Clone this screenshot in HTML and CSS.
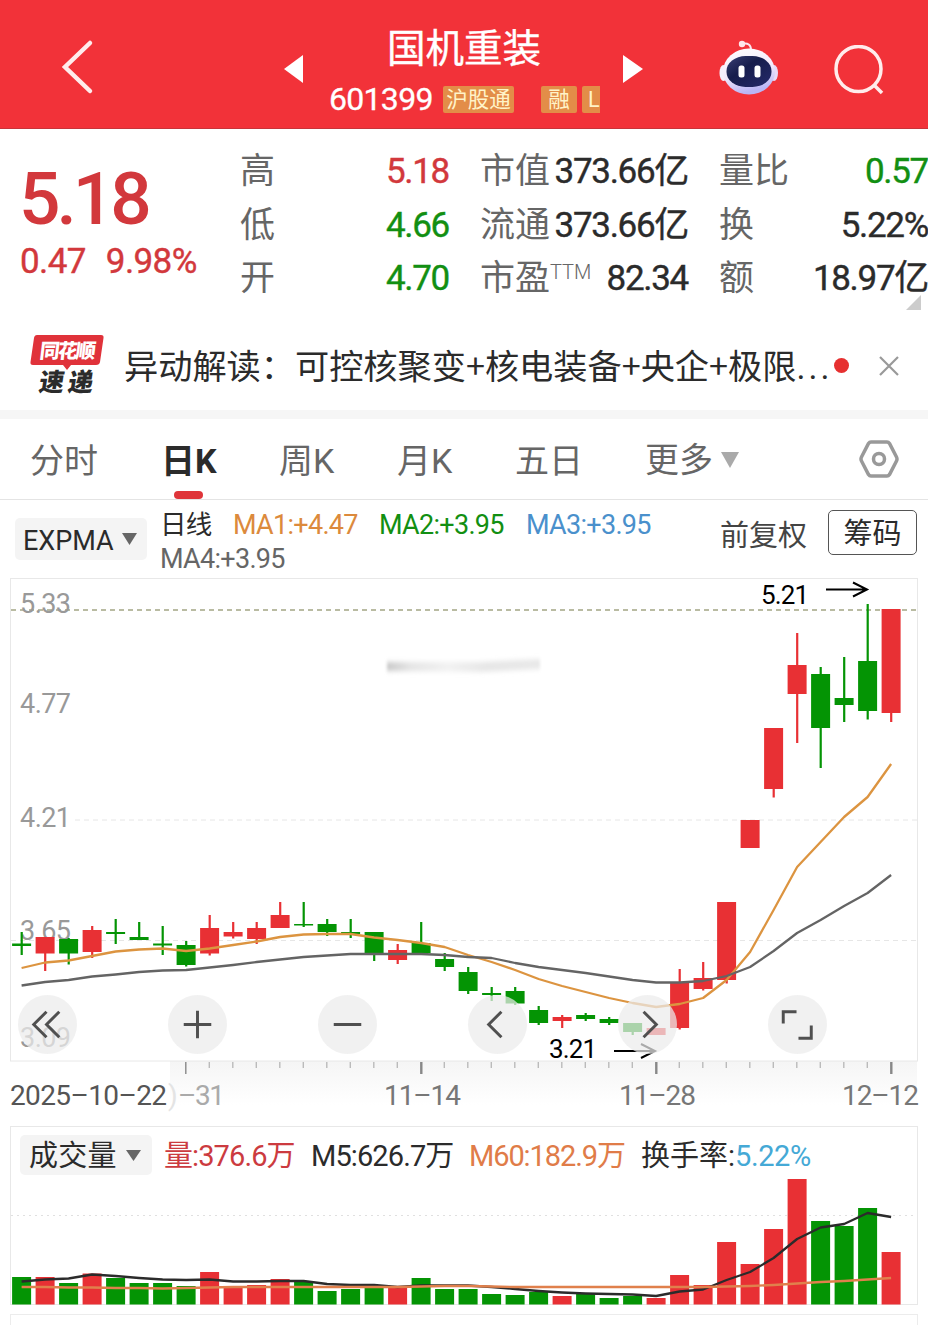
FILE: index.html
```html
<!DOCTYPE html>
<html lang="zh-CN">
<head>
    <meta charset="UTF-8">
    <meta name="viewport" content="width=device-width, initial-scale=1.0">
    <title>国机重装 601399</title>
    <link rel="stylesheet" href="styles.css">
</head>
<body>
    <header class="header">
        <svg class="back" width="34" height="56" viewBox="0 0 34 56"><path d="M29 4 L4 28 L29 52"/></svg>
        <svg class="prev" width="20" height="28" viewBox="0 0 20 28"><path d="M19 0 V28 L0 14 Z"/></svg>
        <div class="stock">
            <h1>国机重装</h1>
            <div class="code">
                <span class="number">601399</span>
                <span class="tag tag-hgt">沪股通</span>
                <span class="tag tag-rong">融</span>
                <span class="tag tag-l">L</span>
            </div>
        </div>
        <svg class="next" width="20" height="28" viewBox="0 0 20 28"><path d="M0 0 V28 L20 14 Z"/></svg>
        <svg class="robot" width="62" height="60" viewBox="0 0 62 60">
            <defs>
                <linearGradient id="shell" x1="0" y1="0" x2="0.3" y2="1">
                    <stop offset="0" stop-color="#fff"/>
                    <stop offset="0.6" stop-color="#f3e9fb"/>
                    <stop offset="1" stop-color="#b9b5f5"/>
                </linearGradient>
                <linearGradient id="visor" x1="0" y1="0" x2="1" y2="1">
                    <stop offset="0" stop-color="#3a3f74"/>
                    <stop offset="0.4" stop-color="#171d4c"/>
                    <stop offset="1" stop-color="#252a6b"/>
                </linearGradient>
            </defs>
            <path d="M24 5 Q33 3 33 11" fill="none" stroke="#fbe9f2" stroke-width="2"/>
            <circle cx="24" cy="5" r="3.2" fill="#ffe6ea"/>
            <ellipse cx="5.500" cy="34" rx="4" ry="8" fill="#f5effc"/>
            <ellipse cx="56" cy="34" rx="4" ry="8" fill="#e9d9f7"/>
            <ellipse cx="31" cy="32.500" rx="26" ry="23" fill="url(#shell)"/>
            <rect x="8.500" y="17" width="45" height="31" rx="19" ry="15" fill="url(#visor)"/>
            <rect x="20.500" y="26.500" width="6" height="12" rx="2.500" fill="#fff"/>
            <rect x="36.500" y="26.500" width="6" height="12" rx="2.500" fill="#fff"/>
        </svg>
        <svg class="search" width="52" height="52" viewBox="0 0 52 52">
            <circle cx="24.500" cy="24" r="22.500"/>
            <path d="M40 40 L48 48"/>
        </svg>
    </header>

    <section class="quote">
        <div class="price">
            <div class="last">5.18</div>
            <div class="change"><span>0.47</span><span>9.98%</span></div>
        </div>
        <dl class="stats stats-a">
            <dt>高</dt><dd class="up">5.18</dd>
            <dt>低</dt><dd class="down">4.66</dd>
            <dt>开</dt><dd class="down">4.70</dd>
        </dl>
        <dl class="stats stats-b">
            <dt>市值</dt><dd>373.66亿</dd>
            <dt>流通</dt><dd>373.66亿</dd>
            <dt>市盈<sup>TTM</sup></dt><dd>82.34</dd>
        </dl>
        <dl class="stats stats-c">
            <dt>量比</dt><dd class="down">0.57</dd>
            <dt>换</dt><dd>5.22%</dd>
            <dt>额</dt><dd>18.97亿</dd>
        </dl>
        <span class="corner"></span>
    </section>

    <section class="news">
        <svg class="news-logo" width="76" height="68" viewBox="0 0 76 68">
            <path d="M7 1 H71 Q74 1 73.500 4 L70 28 Q69.500 31 66 31 H41 L37 36 L33 31 H3 Q0 31 .5 28 L4 4 Q4.500 1 7 1 Z" fill="#e0323a"/>
            <text x="12" y="24.500" class="logo-top" transform="skewX(-7)" textLength="56">同花顺</text>
            <text x="17" y="57" class="logo-bottom" transform="skewX(-9)" textLength="54">速递</text>
        </svg>
        <p class="news-title">异动解读：可控核聚变<i>+</i>核电装备<i>+</i>央企<i>+</i>极限<b>...</b></p>
        <span class="dot"></span>
        <svg class="close" width="22" height="22" viewBox="0 0 22 22"><path d="M2 2 L20 20 M20 2 L2 20"/></svg>
    </section>

    <nav class="tabs">
        <a class="tab">分时</a>
        <a class="tab active">日K</a>
        <a class="tab">周K</a>
        <a class="tab">月K</a>
        <a class="tab">五日</a>
        <a class="tab more">更多<svg width="18" height="16" viewBox="0 0 18 16"><path d="M0 0 H18 L9 16 Z"/></svg></a>
        <svg class="settings" width="40" height="38" viewBox="0 0 40 38">
            <path d="M12 2 H28 Q29.500 2 30.500 3.500 L37.500 17 Q38.500 19 37.500 21 L30.500 34.500 Q29.500 36 28 36 H12 Q10.500 36 9.500 34.500 L2.500 21 Q1.500 19 2.500 17 L9.500 3.500 Q10.500 2 12 2 Z"/>
            <circle cx="20" cy="19" r="5.500"/>
        </svg>
    </nav>

    <section class="indicator">
        <div class="select"><span>EXPMA</span><svg width="15" height="12" viewBox="0 0 15 12"><path d="M0 0 H15 L7.500 12 Z"/></svg></div>
        <div class="averages">
            <span class="line-name">日线</span>
            <span class="ma1">MA1:+4.47</span>
            <span class="ma2">MA2:+3.95</span>
            <span class="ma3">MA3:+3.95</span>
            <span class="ma4">MA4:+3.95</span>
        </div>
        <span class="adjust">前复权</span>
        <button class="chips">筹码</button>
    </section>

    <section class="chart">
        <svg id="kline" width="928" height="548" viewBox="0 578 928 548">
            <defs>
                <linearGradient id="fade" x1="0" y1="0" x2="0" y2="1">
                    <stop offset="0" stop-color="#f5f5f5"/>
                    <stop offset="0.7" stop-color="#fcfcfc"/>
                    <stop offset="1" stop-color="#fff"/>
                </linearGradient>
                <linearGradient id="smear" x1="0" y1="0" x2="1" y2="0">
                    <stop offset="0" stop-color="#c8c8c8"/>
                    <stop offset="0.15" stop-color="#e4e4e4"/>
                    <stop offset="0.4" stop-color="#f2f2f2"/>
                    <stop offset="0.65" stop-color="#e6e6e6"/>
                    <stop offset="1" stop-color="#e8e8e8"/>
                </linearGradient>
                <filter id="soft" x="-10%" y="-100%" width="120%" height="300%"><feGaussianBlur stdDeviation="1.500 2.500"/></filter>
            </defs>
            <rect class="band" x="170" y="1061" width="747" height="44"/>
            <rect class="frame" x="10.500" y="578.500" width="907" height="482.500"/>
            <path class="limit" d="M11 610 H917"/>
            <path class="grid" d="M75 820 H917 M11 940.500 H917"/>
            <path class="smudge" d="M387 662 H480 L540 659 V669 L480 672 L387 671 Z"/>
            <g class="scale">
                <text x="20" y="612.500" textLength="51">5.33</text>
                <text x="20" y="713" textLength="51">4.77</text>
                <text x="20" y="827" textLength="51">4.21</text>
                <text x="20" y="940" textLength="51">3.65</text>
                <text x="20" y="1046.500" textLength="51">3.09</text>
            </g>
            <g id="candles"></g>
            <polyline id="ma-fast"/>
            <polyline id="ma-slow"/>
            <g class="mark">
                <text x="761" y="604" textLength="48">5.21</text>
                <path d="M826 589.500 H867 M853 582.500 L867 589.500 L853 596.500"/>
                <text x="549" y="1057.500" textLength="48">3.21</text>
                <path d="M614 1051 H655 M641 1044 L655 1051 L641 1058"/>
            </g>
            <g id="ticks"></g>
            <g class="dates">
                <text x="168" y="1105" class="ghost">)</text>
                <text x="178" y="1105" class="ghost-date" textLength="47">–31</text>
                <text x="10" y="1105" class="first" textLength="157">2025–10–22</text>
                <text x="384" y="1105" textLength="77">11–14</text>
                <text x="619" y="1105" textLength="77">11–28</text>
                <text x="842" y="1105" textLength="77">12–12</text>
            </g>
        </svg>
        <div class="tools">
            <button><svg viewBox="0 0 60 60"><path d="M29 17 L16 30 L29 43 M42 17 L29 30 L42 43"/></svg></button>
            <button><svg viewBox="0 0 60 60"><path d="M16 30 H44 M30 16 V44"/></svg></button>
            <button><svg viewBox="0 0 60 60"><path d="M16 30 H44"/></svg></button>
            <button><svg viewBox="0 0 60 60"><path d="M34 17 L21 30 L34 43"/></svg></button>
            <button><svg viewBox="0 0 60 60"><path d="M26 17 L39 30 L26 43"/></svg></button>
            <button><svg viewBox="0 0 60 60"><path d="M15.500 29 V17 H29 M44 31 V44 H31"/></svg></button>
        </div>
    </section>

    <section class="volume">
        <div class="volume-head">
            <div class="select"><span>成交量</span><svg width="15" height="11" viewBox="0 0 15 11"><path d="M0 0 H15 L7.500 11 Z"/></svg></div>
            <span class="vol">量:376.6万</span>
            <span class="m5">M5:626.7万</span>
            <span class="m60">M60:182.9万</span>
            <span class="turnover">换手率:<em>5.22%</em></span>
        </div>
        <svg id="volumes" width="907" height="127" viewBox="11 1178 907 127">
            <path class="dots" d="M11 1215.500 H917"/>
            <g id="bars"></g>
            <polyline id="vol-m5"/>
            <polyline id="vol-m60"/>
        </svg>
    </section>
    <section class="next-panel"></section>

    <script>
        // colour, high, low, body top, body bottom, volume top
        const days = [
            ['g', 932, 955, 943.5, 946, 1277], ['r', 937, 971, 937, 953.5, 1277],
            ['g', 938, 964.5, 939, 953.5, 1283], ['r', 926, 958, 930, 952, 1273.5],
            ['g', 919, 944, 932, 934, 1278], ['g', 922, 940, 937, 940, 1283],
            ['g', 926, 955, 943.5, 945.5, 1283], ['g', 941, 966.5, 945, 965, 1286],
            ['r', 915, 955.5, 928, 953.5, 1272], ['r', 922, 938.5, 932, 936.5, 1287],
            ['r', 922, 944, 928, 939, 1285], ['r', 902, 928, 915, 928, 1279],
            ['g', 902, 927, 924, 925.5, 1282], ['g', 919, 936, 924, 932, 1291],
            ['g', 919, 938, 932, 934, 1289], ['g', 932, 961, 932, 954, 1288],
            ['r', 944, 964, 950, 960, 1288], ['g', 922, 953, 943, 953, 1278],
            ['g', 953, 971, 959, 967, 1289], ['g', 967, 994, 972, 991, 1289],
            ['g', 987, 1001, 993, 995, 1294], ['g', 987, 1005, 991, 1003.5, 1295],
            ['g', 1006, 1025, 1010, 1023, 1292], ['r', 1015, 1028, 1017, 1021, 1296],
            ['g', 1013, 1021, 1015, 1019, 1293], ['g', 1017, 1025, 1019, 1023, 1298],
            ['g', 1023, 1035, 1023, 1032, 1296], ['r', 1028, 1035, 1028, 1035, 1298],
            ['r', 969, 1029.5, 983, 1028, 1275], ['r', 962, 990.5, 978, 989, 1285],
            ['r', 902, 983.5, 902, 980, 1242], ['r', 820, 848, 820, 848, 1264],
            ['r', 728, 797.5, 728, 789, 1229], ['r', 633, 743, 665, 694, 1179],
            ['g', 667, 768, 674, 728, 1221], ['g', 657, 722, 698, 705, 1226],
            ['g', 604, 719.5, 661, 711, 1208], ['r', 609, 722, 609, 713, 1252]
        ];
        const fast = [968, 962.5, 960.5, 956, 951.5, 949.5, 948.5, 951, 948.5, 945, 941.5, 937, 934.5, 934, 934, 937.5, 940, 943, 947, 955, 962, 970, 979, 986, 992, 998, 1003, 1007, 1004, 998, 980, 952, 910, 867, 842, 817, 797, 764];
        const slow = [985.5, 982, 980, 976.5, 974.5, 972, 970.5, 970, 967.5, 965, 962, 959.5, 957, 955.5, 954, 954, 954, 954, 955, 957, 958, 963, 967, 970, 973, 976.5, 980, 982.5, 982.5, 981, 976, 967, 951, 933, 920, 906, 893, 875];
        const m5 = [1281.5, 1279.5, 1278.5, 1274.5, 1276, 1278, 1279.5, 1280, 1279.5, 1281.5, 1281.5, 1281, 1281, 1284, 1285, 1285, 1287, 1285.5, 1285.5, 1285.5, 1287, 1289, 1291, 1292.5, 1293.5, 1294, 1294.5, 1296, 1291.5, 1289.5, 1280, 1272, 1258, 1239, 1227.5, 1224, 1213, 1217];
        const m60 = [1287, 1287, 1287.5, 1287.5, 1288, 1288, 1288.5, 1288, 1287.5, 1287, 1287, 1287, 1287, 1287, 1287, 1287, 1287, 1286.5, 1286, 1286, 1286.5, 1287, 1287, 1287, 1287, 1287, 1287, 1287, 1287, 1287, 1286.5, 1286, 1285, 1283.5, 1282, 1281, 1279.5, 1278];

        const x = i => 21.6 + i * 23.5;
        const rect = (cls, left, top, w, h) => `<rect class="${cls}" x="${left}" y="${top}" width="${w}" height="${h}"/>`;
        const points = list => list.map((y, i) => `${x(i)},${y}`).join(' ');

        let candles = '', bars = '', ticks = '';
        days.forEach(([c, high, low, top, bottom, vol], i) => {
            candles += rect(c, x(i) - 1, high, 2.2, low - high);
            candles += rect(c, x(i) - 9.5, top, 19, bottom - top);
            bars += rect(c, x(i) - 9.5, vol, 19, 1304.5 - vol);
            if (i >= 7) {
                const major = [7, 17, 27, 37].includes(i);
                ticks += rect(major ? 'tick major' : 'tick', x(i) - 1, 1062, major && i > 7 ? 2.4 : 1.4, major ? 12 : 6);
            }
        });
        document.getElementById('candles').innerHTML = candles;
        document.getElementById('bars').innerHTML = bars;
        document.getElementById('ticks').innerHTML = ticks;
        document.getElementById('ma-fast').setAttribute('points', points(fast));
        document.getElementById('ma-slow').setAttribute('points', points(slow));
        document.getElementById('vol-m5').setAttribute('points', points(m5));
        document.getElementById('vol-m60').setAttribute('points', points(m60));
    </script>
</body>
</html>
```
FILE: styles.css
```css
* {
    box-sizing: border-box;
}

body {
    margin: 0;
    width: 928px;
    height: 1325px;
    overflow: hidden;
    background: #fff;
    color: #2b2b2b;
    font-family: Roboto, "Noto Sans CJK SC", sans-serif;
    line-height: 1.2;
    white-space: nowrap;
}

svg {
    display: block;
    flex: none;
}

button {
    padding: 0;
    font-family: inherit;
}

/* header */
.header {
    display: flex;
    align-items: flex-start;
    height: 129px;
    background: #f23239;
    border-bottom: 1px solid #c8343a;
}

.back {
    margin: 39px 0 0 61px;
    fill: none;
    stroke: #ffecec;
    stroke-width: 4.5;
    stroke-linecap: round;
}

.prev, .next {
    margin-top: 55px;
    fill: #fff;
}

.prev {
    margin-left: 189px;
}

.stock {
    width: 272px;
    margin-left: 25px;
    color: #fff;
}

.stock h1 {
    margin: 23px 0 0 58px;
    font-size: 38.5px;
    font-weight: 400;
    line-height: 52px;
    -webkit-text-stroke: 0.4px #fff;
}

.code {
    display: flex;
    align-items: center;
    height: 28px;
    margin-top: 10px;
}

.number {
    width: 114px;
    font-size: 32px;
    letter-spacing: -0.7px;
    -webkit-text-stroke: 0.3px #fff;
}

.tag {
    height: 27px;
    border-radius: 2px;
    background: #e38d48;
    color: #fff3c8;
    font-size: 21.5px;
    line-height: 27px;
    text-align: center;
    overflow: hidden;
}

.tag-hgt {
    width: 71px;
}

.tag-rong {
    width: 36px;
    margin-left: 27px;
}

.tag-l {
    width: 18px;
    margin-left: 5px;
    padding-left: 6px;
    text-align: left;
    border-radius: 2px 0 0 2px;
}

.next {
    margin-left: 22px;
}

.robot {
    margin: 39px 0 0 75px;
}

.search {
    margin: 45px 0 0 54px;
    fill: none;
    stroke: #ffecec;
    stroke-width: 3.5;
}

/* quote */
.quote {
    position: relative;
    display: flex;
    height: 185px;
}

.price {
    width: 240px;
    padding: 28px 0 0 19px;
    color: #d2383c;
}

.last {
    font-size: 73px;
    font-weight: 500;
    line-height: 84px;
    letter-spacing: -4px;
}

.change {
    display: flex;
    gap: 20px;
    font-size: 35px;
    line-height: 41px;
    letter-spacing: -0.6px;
    padding-left: 1px;
    -webkit-text-stroke: 0.4px #d2383c;
}

.stats {
    display: grid;
    grid-template-columns: 70px 1fr;
    grid-auto-rows: 53.7px;
    align-items: center;
    margin: 16px 0 0;
    height: 162px;
    font-size: 35px;
}

.stats dt {
    color: #666;
}

.stats dd {
    margin: 0;
    text-align: right;
    letter-spacing: -1.3px;
    -webkit-text-stroke: 0.4px currentColor;
}

.stats-a {
    width: 209px;
}

.stats-b {
    width: 239px;
    padding-left: 31px;
}

.stats-c {
    width: 240px;
    padding-left: 31px;
}

.stats sup {
    font-size: 20px;
    font-weight: 300;
    line-height: 0;
    vertical-align: 11px;
}

.up {
    color: #d2383c;
}

.down {
    color: #128f12;
}

.corner {
    position: absolute;
    right: 7px;
    bottom: 4px;
    border-left: 15px solid transparent;
    border-bottom: 15px solid #ccc;
}

/* news */
.news {
    display: flex;
    align-items: center;
    height: 105px;
    padding: 0 0 0 30px;
    border-bottom: 9px solid #f6f6f6;
}

.news-logo {
    margin-top: 12px;
}

.logo-top {
    fill: #fff;
    font-size: 20px;
    font-weight: 900;
}

.logo-bottom {
    fill: #2b2b2b;
    font-size: 25px;
    font-weight: 900;
}

.news-title {
    width: 710px;
    margin: 12px 0 0 18px;
    font-size: 34.2px;
}

.news-title i {
    display: inline-block;
    width: 19px;
    font-style: normal;
    font-family: "Noto Sans CJK SC", sans-serif;
    line-height: 1;
    text-align: center;
}

.news-title b {
    font-weight: 400;
    letter-spacing: 3px;
}

.dot {
    width: 15px;
    height: 15px;
    border-radius: 50%;
    background: #e63030;
    margin-top: 7px;
}

.close {
    margin: 7px 0 0 29px;
    fill: none;
    stroke: #999;
    stroke-width: 2.2;
}

/* tabs */
.tabs {
    display: flex;
    align-items: center;
    height: 81px;
    padding-left: 30px;
    border-bottom: 1px solid #e4e4e4;
}

.tab {
    position: relative;
    width: 118px;
    height: 80px;
    color: #666;
    font-size: 34px;
    line-height: 85px;
}

.tab:first-child {
    width: 131px;
}

.active {
    color: #2b2b2b;
    font-weight: 700;
}

.active::after {
    content: "";
    position: absolute;
    left: 13px;
    bottom: 0;
    width: 29px;
    height: 8px;
    border-radius: 4px;
    background: #df353a;
}

.more {
    display: flex;
    align-items: center;
    gap: 8px;
    width: 213px;
    padding-top: 2px;
    margin-left: 12px;
}

.more svg {
    fill: #aaa;
}

.settings {
    margin-left: 1px;
    fill: none;
    stroke: #999;
    stroke-width: 3.5;
}

/* indicator */
.indicator {
    display: flex;
    height: 78px;
    padding: 10px 0 0 15px;
}

.select {
    display: flex;
    align-items: center;
    border-radius: 5px;
    background: #f4f4f4;
}

.select svg {
    fill: #666;
}

.indicator .select {
    width: 132px;
    height: 42px;
    margin-top: 8px;
    padding-left: 8px;
    gap: 8px;
    font-size: 27px;
}

.indicator .select span {
    padding-top: 4px;
}

.averages {
    display: grid;
    grid-template-columns: 73px 146px 147px 194px;
    grid-auto-rows: 34px;
    align-items: center;
    margin: -2px 0 0 13px;
    font-size: 27px;
    letter-spacing: -0.7px;
}

.line-name {
    font-size: 26.500px;
}

.ma1 {
    color: #dc8a3c;
}

.ma2 {
    color: #128f12;
}

.ma3 {
    color: #4a90cc;
}

.ma4 {
    grid-column: 1 / 3;
    color: #666;
}

.adjust {
    width: 108px;
    color: #444;
    font-size: 29px;
    line-height: 53px;
}

.chips {
    width: 89px;
    height: 45px;
    padding-top: 3px;
    border: 1px solid #555;
    border-radius: 5px;
    background: #fff;
    color: #2b2b2b;
    font-size: 29px;
    line-height: 40px;
}

/* candlestick chart */
.chart {
    position: relative;
    height: 548px;
}

.frame {
    fill: none;
    stroke: #e8e8e8;
}

.band {
    fill: url(#fade);
}

.limit {
    stroke: #a3a584;
    stroke-width: 1.5;
    stroke-dasharray: 5 4;
}

.grid {
    stroke: #e6e6e6;
    stroke-dasharray: 5 4;
}

.smudge {
    fill: url(#smear);
    filter: url(#soft);
}

.scale text {
    fill: #999;
    font-size: 27px;
}

.r {
    fill: #e83034;
}

.g {
    fill: #049404;
}

polyline {
    fill: none;
    stroke-width: 2.3;
    stroke-linejoin: round;
}

#ma-fast {
    stroke: #dc9440;
}

#ma-slow {
    stroke: #646464;
}

.mark text {
    fill: #000;
    font-size: 26px;
}

.mark path {
    fill: none;
    stroke: #000;
    stroke-width: 2;
}

.tick {
    fill: #bbb;
}

.major {
    fill: #888;
}

.dates text {
    fill: #777;
    font-size: 28px;
}

.dates .first {
    fill: #555;
}

.dates .ghost {
    fill: #e4e4e4;
}

.dates .ghost-date {
    fill: #aaa;
}

.tools {
    position: absolute;
    left: 17.500px;
    top: 417px;
    display: flex;
    gap: 91.200px;
}

.tools button {
    width: 59px;
    height: 59px;
    border: 0;
    border-radius: 50%;
    background: rgba(235, 235, 235, 0.72);
}

.tools path {
    fill: none;
    stroke: #505050;
    stroke-width: 3;
}

/* volume */
.volume {
    height: 179px;
    margin: 0 10px;
    border: 1px solid #e8e8e8;
}

.volume-head {
    display: flex;
    height: 51px;
    padding: 8px 0 0 9px;
    font-size: 29px;
    line-height: 43px;
    letter-spacing: -0.9px;
}

.volume .select {
    width: 132px;
    height: 40px;
    padding-left: 9px;
    gap: 9px;
    letter-spacing: 0.3px;
}

.volume .select span {
    padding-top: 3px;
}

.vol {
    width: 147px;
    margin-left: 12px;
    color: #cc3b40;
}

.m5 {
    width: 158px;
}

.m60 {
    width: 172px;
    color: #e07c48;
    letter-spacing: -1.1px;
}

.turnover {
    letter-spacing: 0;
}

.turnover em {
    color: #45a9d6;
    font-style: normal;
    letter-spacing: -0.4px;
}

.dots {
    stroke: #e0e0e0;
    stroke-dasharray: 2 4;
}

#vol-m5 {
    stroke: #2b2b2b;
}

#vol-m60 {
    stroke: #e0804c;
}

.next-panel {
    height: 20px;
    margin: 9px 10px 0;
    border: 1px solid #ececec;
}
```
